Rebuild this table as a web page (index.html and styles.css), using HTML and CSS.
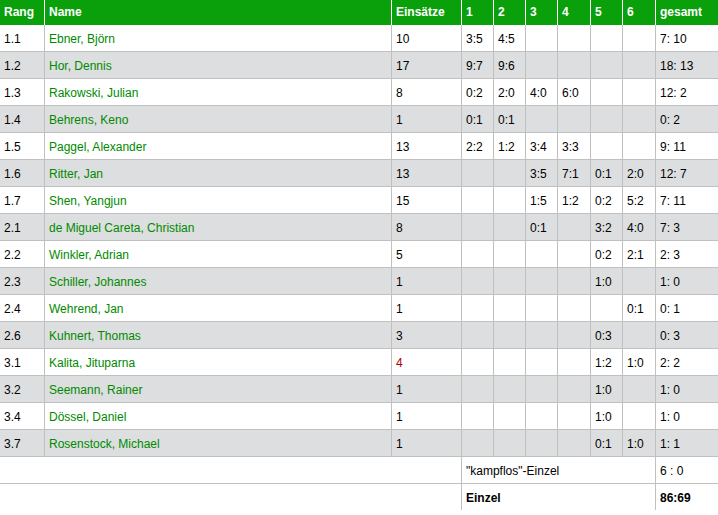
FILE: index.html
```html
<!DOCTYPE html>
<html lang="de">
<head>
<meta charset="utf-8">
<title>Einzelbilanz</title>
<link rel="stylesheet" href="styles.css">
</head>
<body>
<table class="bilanz">
  <thead>
    <tr>
      <th class="c-rang">Rang</th>
      <th class="c-name">Name</th>
      <th class="c-eins">Einsätze</th>
      <th class="c-r">1</th>
      <th class="c-r">2</th>
      <th class="c-r">3</th>
      <th class="c-r4">4</th>
      <th class="c-r">5</th>
      <th class="c-r4">6</th>
      <th class="c-ges">gesamt</th>
    </tr>
  </thead>
  <tbody>
    <tr><td>1.1</td><td class="name">Ebner, Björn</td><td>10</td><td>3:5</td><td>4:5</td><td></td><td></td><td></td><td></td><td class="last">7: 10</td></tr>
    <tr class="alt"><td>1.2</td><td class="name">Hor, Dennis</td><td>17</td><td>9:7</td><td>9:6</td><td></td><td></td><td></td><td></td><td class="last">18: 13</td></tr>
    <tr><td>1.3</td><td class="name">Rakowski, Julian</td><td>8</td><td>0:2</td><td>2:0</td><td>4:0</td><td>6:0</td><td></td><td></td><td class="last">12: 2</td></tr>
    <tr class="alt"><td>1.4</td><td class="name">Behrens, Keno</td><td>1</td><td>0:1</td><td>0:1</td><td></td><td></td><td></td><td></td><td class="last">0: 2</td></tr>
    <tr><td>1.5</td><td class="name">Paggel, Alexander</td><td>13</td><td>2:2</td><td>1:2</td><td>3:4</td><td>3:3</td><td></td><td></td><td class="last">9: 11</td></tr>
    <tr class="alt"><td>1.6</td><td class="name">Ritter, Jan</td><td>13</td><td></td><td></td><td>3:5</td><td>7:1</td><td>0:1</td><td>2:0</td><td class="last">12: 7</td></tr>
    <tr><td>1.7</td><td class="name">Shen, Yangjun</td><td>15</td><td></td><td></td><td>1:5</td><td>1:2</td><td>0:2</td><td>5:2</td><td class="last">7: 11</td></tr>
    <tr class="alt"><td>2.1</td><td class="name">de Miguel Careta, Christian</td><td>8</td><td></td><td></td><td>0:1</td><td></td><td>3:2</td><td>4:0</td><td class="last">7: 3</td></tr>
    <tr><td>2.2</td><td class="name">Winkler, Adrian</td><td>5</td><td></td><td></td><td></td><td></td><td>0:2</td><td>2:1</td><td class="last">2: 3</td></tr>
    <tr class="alt"><td>2.3</td><td class="name">Schiller, Johannes</td><td>1</td><td></td><td></td><td></td><td></td><td>1:0</td><td></td><td class="last">1: 0</td></tr>
    <tr><td>2.4</td><td class="name">Wehrend, Jan</td><td>1</td><td></td><td></td><td></td><td></td><td></td><td>0:1</td><td class="last">0: 1</td></tr>
    <tr class="alt"><td>2.6</td><td class="name">Kuhnert, Thomas</td><td>3</td><td></td><td></td><td></td><td></td><td>0:3</td><td></td><td class="last">0: 3</td></tr>
    <tr><td>3.1</td><td class="name">Kalita, Jituparna</td><td class="warn">4</td><td></td><td></td><td></td><td></td><td>1:2</td><td>1:0</td><td class="last">2: 2</td></tr>
    <tr class="alt"><td>3.2</td><td class="name">Seemann, Rainer</td><td>1</td><td></td><td></td><td></td><td></td><td>1:0</td><td></td><td class="last">1: 0</td></tr>
    <tr><td>3.4</td><td class="name">Dössel, Daniel</td><td>1</td><td></td><td></td><td></td><td></td><td>1:0</td><td></td><td class="last">1: 0</td></tr>
    <tr class="alt"><td>3.7</td><td class="name">Rosenstock, Michael</td><td>1</td><td></td><td></td><td></td><td></td><td>0:1</td><td>1:0</td><td class="last">1: 1</td></tr>
    <tr class="foot"><td colspan="3"></td><td colspan="6">"kampflos"-Einzel</td><td class="last">6 : 0</td></tr>
    <tr class="foot total"><td colspan="3"></td><td colspan="6">Einzel</td><td class="last">86:69</td></tr>
  </tbody>
</table>
</body>
</html>
```
FILE: styles.css
```css
html, body {
  margin: 0;
  padding: 0;
  background: #ffffff;
}

.bilanz {
  width: 718px;
  table-layout: fixed;
  border-collapse: separate;
  border-spacing: 0;
  font-family: "Liberation Sans", Arial, sans-serif;
  font-size: 12px;
  color: #000000;
}

.bilanz th,
.bilanz td {
  box-sizing: border-box;
  padding: 0 0 0 4px;
  text-align: left;
  white-space: nowrap;
  overflow: hidden;
}

.bilanz thead th {
  height: 25px;
  background: #0aa00c;
  color: #ffffff;
  font-weight: bold;
  border-right: 1px solid #ffffff;
  vertical-align: middle;
  padding-bottom: 1px;
}

.bilanz thead th.c-ges {
  border-right: none;
}

.c-rang { width: 45px; }
.c-name { width: 347px; }
.c-eins { width: 70px; }
.c-r { width: 32px; }
.c-r4 { width: 33px; }
.c-ges { width: 62px; }

.bilanz tbody td {
  height: 27px;
  border-right: 1px solid #c0c0c0;
  border-bottom: 1px solid #c0c0c0;
  vertical-align: middle;
  padding-top: 1px;
}

.bilanz tbody td.last {
  border-right: none;
}

.bilanz tbody tr.alt td {
  background: #dcdedf;
}

.bilanz td.name {
  color: #008a00;
}

.bilanz td.warn {
  color: #b00000;
}

.bilanz tr.total td {
  border-bottom: none;
  font-weight: bold;
  height: 26px;
}
```
